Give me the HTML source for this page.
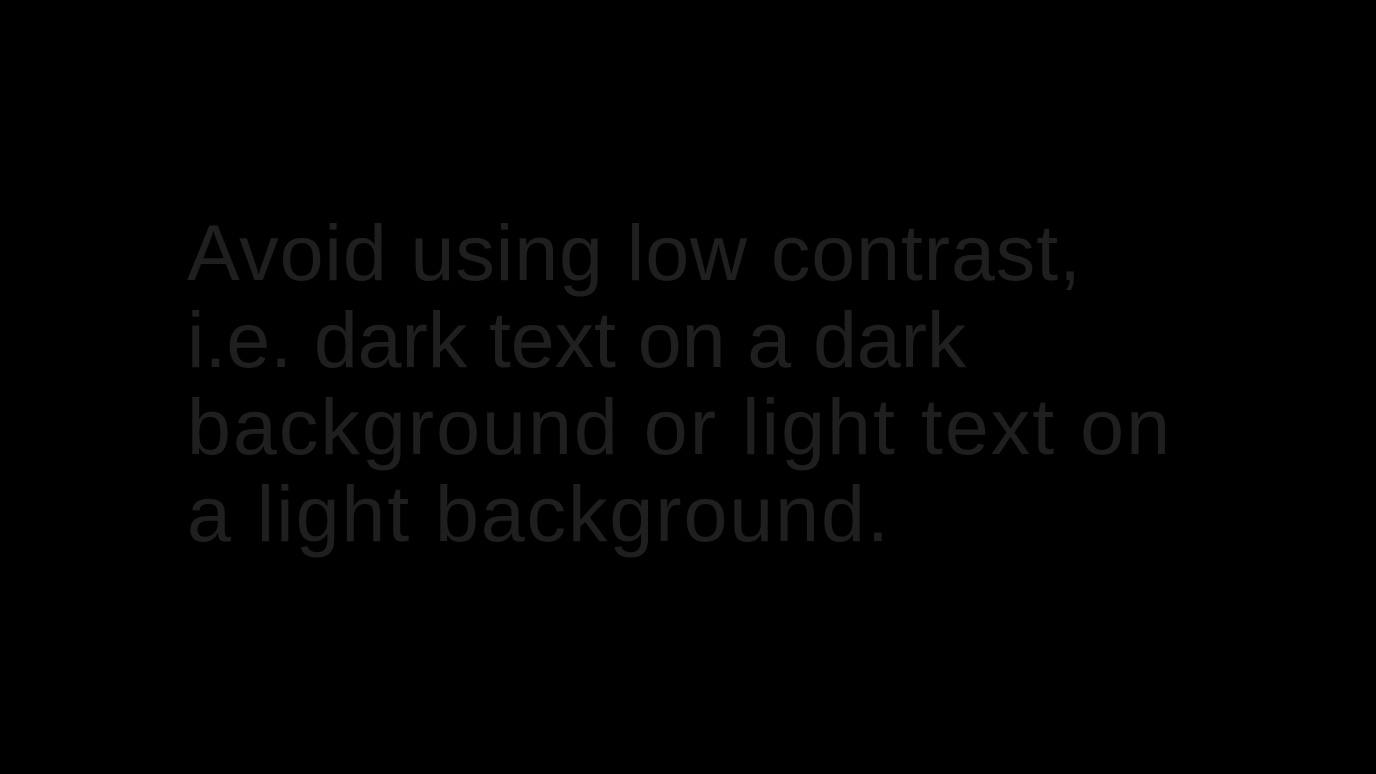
<!DOCTYPE html>
<html><head><meta charset="utf-8"><style>
html,body{margin:0;padding:0;background:#000;width:1376px;height:774px;overflow:hidden}
.t{position:absolute;left:187px;top:209px;font-family:"Liberation Sans",sans-serif;font-size:79px;line-height:87px;color:#1f1f1f;white-space:nowrap;font-weight:normal}
.t div{height:87px}
</style></head><body>
<div class="t">
<div style="letter-spacing:0.9px">Avoid using low contrast,</div>
<div style="letter-spacing:-0.1px">i.e. dark text on a dark</div>
<div style="letter-spacing:2px">background or light text on</div>
<div style="letter-spacing:1.9px">a light background.</div>
</div>
</body></html>
